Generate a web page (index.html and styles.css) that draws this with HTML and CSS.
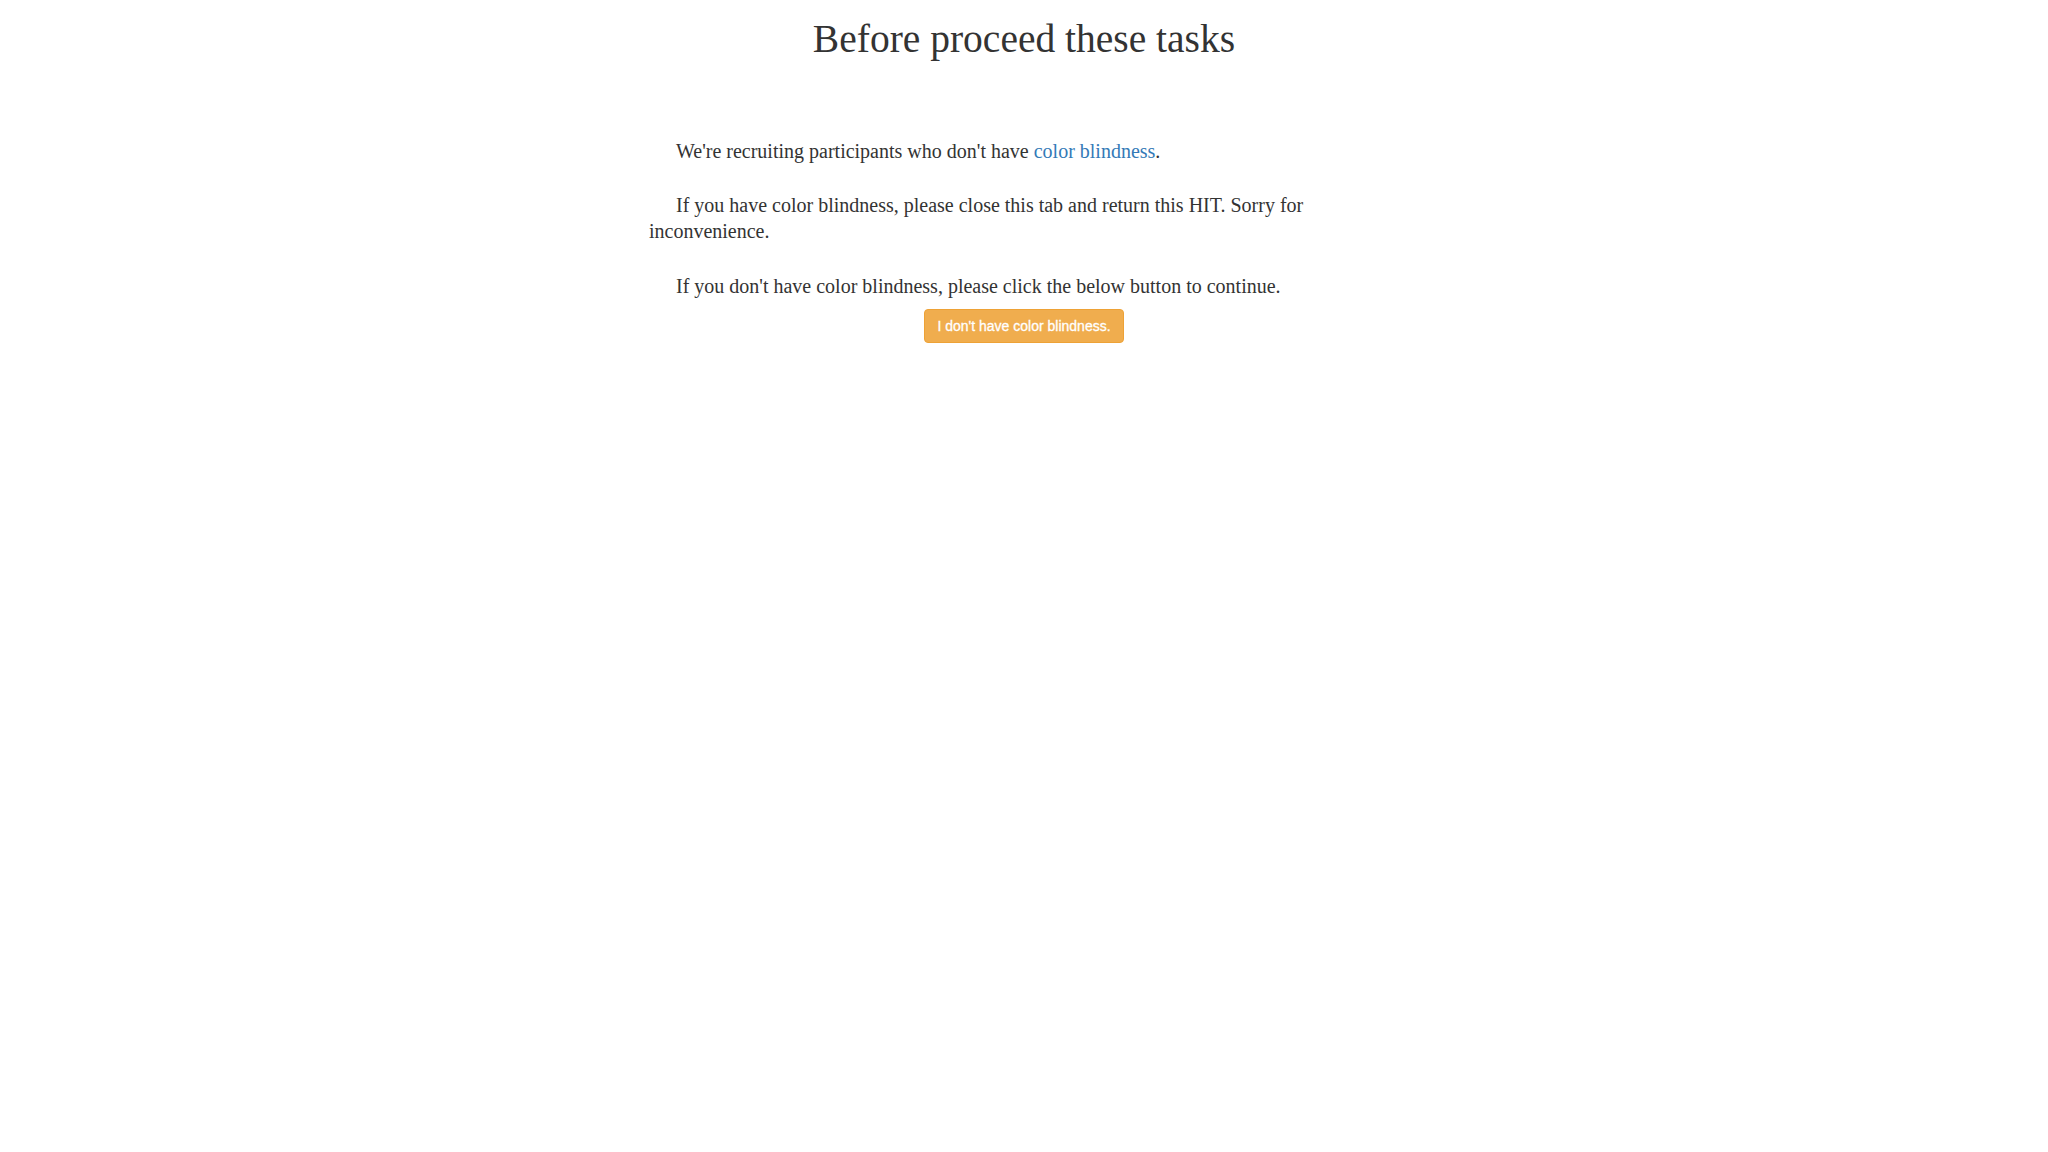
FILE: index.html
```html
<!DOCTYPE html>
<html lang="en">
<head>
<meta charset="utf-8">
<title>Before proceed these tasks</title>
<link rel="stylesheet" href="styles.css">
</head>
<body>
<main class="container">
  <h1 class="title">Before proceed these tasks</h1>
  <section class="content">
    <p class="para">We're recruiting participants who don't have <a class="link" href="#">color blindness</a>.</p>
    <p class="para">If you have color blindness, please close this tab and return this HIT. Sorry for inconvenience.</p>
    <p class="para para-last">If you don't have color blindness, please click the below button to continue.</p>
    <div class="actions">
      <button class="btn" type="button">I don't have color blindness.</button>
    </div>
  </section>
</main>
</body>
</html>
```
FILE: styles.css
```css
html, body {
  margin: 0;
  padding: 0;
  background: #ffffff;
}
body {
  font-family: "Liberation Serif", "DejaVu Serif", serif;
  color: #333333;
}
.container {
  width: 750px;
  margin: 0 auto;
}
.title {
  margin: 20px 0 0;
  font-size: 39.5px;
  line-height: 39.6px;
  font-weight: 400;
  text-align: center;
  color: #333333;
}
.content {
  margin-top: 79px;
}
.para {
  margin: 0 0 29px;
  font-size: 20px;
  line-height: 25.7px;
  text-indent: 27px;
}
.para-last {
  margin-bottom: 10px;
}
.link {
  color: #337ab7;
  text-decoration: none;
}
.actions {
  text-align: center;
}
.btn {
  display: inline-block;
  padding: 6px 12px;
  font-family: "Liberation Sans", Arial, sans-serif;
  font-size: 14px;
  line-height: 20px;
  color: #ffffff;
  -webkit-text-stroke: 0.3px #ffffff;
  background: #f0ad4e;
  border: 1px solid #eea236;
  border-radius: 4px;
  cursor: pointer;
}
```
